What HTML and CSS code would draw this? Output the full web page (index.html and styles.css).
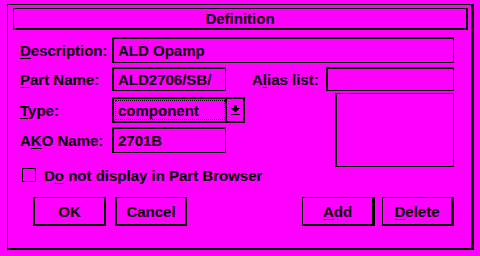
FILE: index.html
```html
<!DOCTYPE html>
<html lang="en">
<head>
  <meta charset="UTF-8">
  <title>Definition</title>
  <link rel="stylesheet" href="styles.css">
</head>
<body>

<div class="dialog">
  <div class="titlebar">Definition</div>

  <div class="form">
    <div class="row desc-row">
      <span class="label"><u>D</u>escription:</span>
      <div class="field wide">ALD Opamp</div>
    </div>

    <div class="row part-row">
      <span class="label"><u>P</u>art Name:</span>
      <div class="field short">ALD2706/SB/</div>
      <span class="alias-label">A<u>l</u>ias list:</span>
      <div class="field alias"></div>
    </div>

    <div class="lower">
      <div class="left">
        <div class="row type-row">
          <span class="label"><u>T</u>ype:</span>
          <div class="combo">
            <div class="combo-text"><span class="focus">component</span></div>
            <div class="combo-btn">
              <svg width="9" height="10" viewBox="0 0 9 10">
                <rect x="3" y="0" width="3" height="3" fill="#000"/>
                <polygon points="0,3 9,3 4.5,7.5" fill="#000"/>
                <rect x="0" y="9" width="9" height="1" fill="#000"/>
              </svg>
            </div>
          </div>
        </div>
        <div class="row ako-row">
          <span class="label">A<u>K</u>O Name:</span>
          <div class="field short">2701B</div>
        </div>
      </div>
      <div class="listbox"></div>
    </div>

    <div class="check-row">
      <span class="checkbox"></span>
      <span>D<u>o</u> not display in Part Browser</span>
    </div>

    <div class="buttons">
      <button class="btn default">OK</button>
      <button class="btn default">Cancel</button>
      <button class="btn plain push"><u>A</u>dd</button>
      <button class="btn plain"><u>D</u>elete</button>
    </div>
  </div>
</div>

</body>
</html>
```

FILE: styles.css
```css
* { box-sizing: border-box; }
body {
  margin: 0;
  background: #ff00ff;
  color: #000;
  font: bold 15px "Liberation Sans", Arial, sans-serif;
}
u { text-decoration-thickness: 1px; text-underline-offset: 2px; }

.dialog {
  margin: 4px 0 0 7px;
  width: 467px;
  height: 246px;
  border: 1px solid #000;
  border-right-width: 3px;
  border-bottom-width: 2px;
}
.titlebar {
  margin: 3px 0 0 5px;
  width: 455px;
  height: 22px;
  border: 1px solid #000;
  border-right-width: 2px;
  border-bottom-width: 2px;
  text-align: center;
  line-height: 19px;
}

.form { padding: 0 0 0 12px; width: 463px; padding-right: 17px; }
.row { display: flex; align-items: center; }
.label { width: 92px; white-space: nowrap; }

.field {
  border: 1px solid #000;
  border-top-width: 2px;
  border-left-width: 2px;
  padding-left: 4px;
  display: flex;
  align-items: center;
  white-space: nowrap;
  overflow: hidden;
}
.desc-row { margin-top: 7px; }
.desc-row .field { height: 26px; }
.wide { width: 342px; }
.short { width: 114px; }

.part-row { margin-top: 4px; }
.part-row .field { height: 24px; }
.alias-label { margin-left: 26px; width: 74px; white-space: nowrap; }
.alias { width: 128px; }

.lower { display: flex; align-items: flex-start; }
.left { padding-top: 6px; }
.listbox {
  margin: 2px 0 0 auto;
  width: 119px;
  height: 74px;
  border: 1px solid #000;
  border-left-width: 2px;
}

.combo {
  display: flex;
  width: 133px;
  height: 26px;
  border: 2px solid #000;
}
.combo-text {
  width: 113px;
  border-right: 2px solid #000;
  padding: 1px 0 1px 1px;
  display: flex;
}
.focus {
  flex: 1;
  border: 1px dotted #000;
  padding-left: 2px;
  line-height: 19px;
}
.combo-btn {
  flex: 1;
  display: flex;
  justify-content: center;
  padding-top: 6px;
}

.ako-row { margin-top: 4px; }
.ako-row .field { height: 26px; }

.check-row {
  display: flex;
  align-items: center;
  margin: 1px 0 0 2px;
  height: 14px;
  gap: 8px;
}
.checkbox {
  width: 14px;
  height: 14px;
  border: 1px solid #000;
}

.buttons {
  display: flex;
  margin: 15px 0 0 13px;
}
.btn {
  font: inherit;
  color: #000;
  background: none;
  height: 29px;
  padding: 0;
  border: 2px solid #000;
  border-top-width: 1px;
  margin-right: 9px;
}
.default { width: 73px; }
.default + .default { width: 72px; }
.plain {
  width: 73px;
  border-width: 1px 3px 2px 1px;
  margin-right: 7px;
}
.plain:last-child { width: 72px; margin-right: 0; }
.push { margin-left: auto; }
```
